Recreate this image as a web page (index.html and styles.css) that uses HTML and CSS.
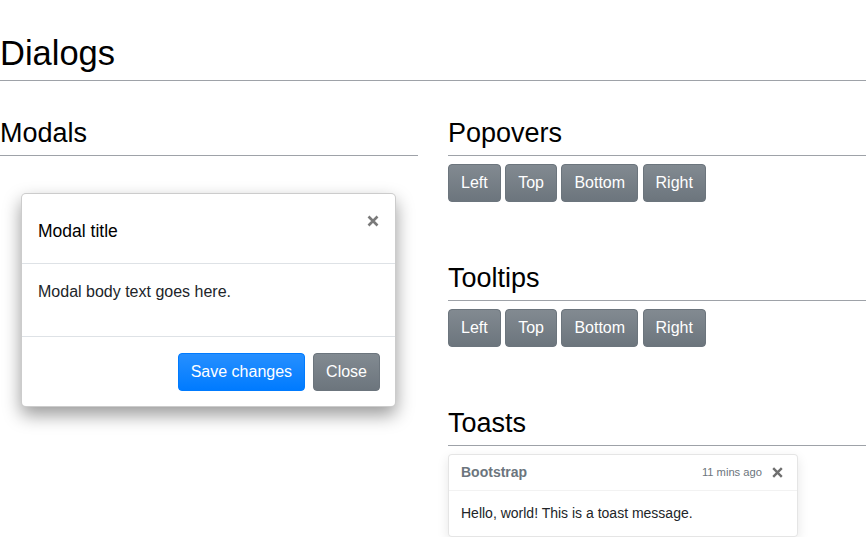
FILE: index.html
```html
<!DOCTYPE html>
<html lang="en">
<head>
<meta charset="utf-8">
<title>Dialogs</title>
<link rel="stylesheet" href="styles.css">
</head>
<body>
  <h1 class="page-title">Dialogs</h1>
  <div class="row">
    <section class="col">
      <h2 class="section-title">Modals</h2>
      <div class="modal">
        <div class="modal-header">
          <h5 class="modal-title">Modal title</h5>
          <button class="close-btn" type="button" aria-label="Close">
            <svg width="12" height="12" viewBox="0 0 12 12"><path d="M1.5 1.5 L10.5 10.5 M10.5 1.5 L1.5 10.5" stroke="currentColor" stroke-width="2.6" stroke-linecap="butt"/></svg>
          </button>
        </div>
        <div class="modal-body">
          <p>Modal body text goes here.</p>
        </div>
        <div class="modal-footer">
          <button class="btn btn-primary" type="button">Save changes</button>
          <button class="btn btn-secondary" type="button">Close</button>
        </div>
      </div>
    </section>
    <div class="col">
      <section class="group">
        <h2 class="section-title">Popovers</h2>
        <div class="btn-row">
          <button class="btn btn-secondary" type="button">Left</button>
          <button class="btn btn-secondary" type="button">Top</button>
          <button class="btn btn-secondary" type="button">Bottom</button>
          <button class="btn btn-secondary" type="button">Right</button>
        </div>
      </section>
      <section class="group">
        <h2 class="section-title">Tooltips</h2>
        <div class="btn-row">
          <button class="btn btn-secondary" type="button">Left</button>
          <button class="btn btn-secondary" type="button">Top</button>
          <button class="btn btn-secondary" type="button">Bottom</button>
          <button class="btn btn-secondary" type="button">Right</button>
        </div>
      </section>
      <section class="group">
        <h2 class="section-title">Toasts</h2>
        <div class="toast">
          <div class="toast-header">
            <strong class="toast-brand">Bootstrap</strong>
            <small class="toast-time">11 mins ago</small>
            <button class="toast-close" type="button" aria-label="Close">
              <svg width="11" height="11" viewBox="0 0 11 11"><path d="M1.2 1.2 L9.8 9.8 M9.8 1.2 L1.2 9.8" stroke="currentColor" stroke-width="2.4"/></svg>
            </button>
          </div>
          <div class="toast-body">Hello, world! This is a toast message.</div>
        </div>
      </section>
    </div>
  </div>
</body>
</html>
```

FILE: styles.css
```css
* { box-sizing: border-box; }

html, body {
  margin: 0;
  padding: 0;
  background: #fff;
}

body {
  font-family: "Liberation Sans", Arial, sans-serif;
  font-size: 16px;
  line-height: 1.5;
  color: #212529;
  overflow: hidden;
}

.page-title {
  margin: 33px 0 0;
  padding: 0 0 6px;
  font-size: 34.5px;
  font-weight: 400;
  line-height: 41px;
  color: #000;
  border-bottom: 1px solid #9ea2a8;
}

.row {
  display: grid;
  grid-template-columns: 418px 418px;
  column-gap: 30px;
  margin-top: 36px;
}

.section-title {
  margin: 0;
  padding: 0 0 6px;
  font-size: 27px;
  font-weight: 400;
  line-height: 32px;
  color: #000;
  border-bottom: 1px solid #9ea2a8;
}

.group + .group { margin-top: 60px; }

.btn-row {
  margin-top: 8px;
  height: 38px;
  font-size: 16px;
  line-height: 38px;
}

.btn {
  display: inline-block;
  vertical-align: top;
  font-family: inherit;
  font-size: 16px;
  line-height: 24px;
  padding: 6px 12px;
  border: 1px solid transparent;
  border-radius: 4px;
  color: #fff;
  cursor: pointer;
}

.btn-primary {
  background: #007bff linear-gradient(180deg, #268fff, #007bff) repeat-x;
  border-color: #007bff;
}

.btn-secondary {
  background: #6c757d linear-gradient(180deg, #828a91, #6c757d) repeat-x;
  border-color: #6c757d;
}

/* Modal */
.modal {
  margin: 37px 22px 0 21px;
  background: #fff;
  border: 1px solid rgba(0, 0, 0, 0.2);
  border-radius: 5px;
  box-shadow: 0 8px 18px rgba(0, 0, 0, 0.4);
}

.modal-header {
  display: flex;
  align-items: flex-start;
  justify-content: space-between;
  padding: 24px 16px 19px 16px;
  border-bottom: 1px solid #dee2e6;
}

.modal-title {
  margin: 0;
  font-size: 17.5px;
  font-weight: 400;
  line-height: 26px;
  color: #000;
}

.close-btn {
  display: flex;
  margin: -3px 0 0;
  padding: 0;
  border: 0;
  background: none;
  color: #7a7a7a;
  cursor: pointer;
}

.modal-body {
  padding: 16px;
}

.modal-body p {
  margin: 0 0 16px;
}

.modal-footer {
  display: flex;
  justify-content: flex-end;
  gap: 8px;
  padding: 16px 15px 15px;
  border-top: 1px solid #dee2e6;
}

/* Toast */
.toast {
  width: 350px;
  margin-top: 8px;
  font-size: 14px;
  line-height: 21px;
  background: rgba(255, 255, 255, 0.85);
  border: 1px solid rgba(0, 0, 0, 0.1);
  border-radius: 4px;
  box-shadow: 0 4px 12px rgba(0, 0, 0, 0.1);
}

.toast-header {
  display: flex;
  align-items: center;
  padding: 7px 14px 7px 12px;
  color: #6c757d;
  border-bottom: 1px solid rgba(0, 0, 0, 0.05);
}

.toast-brand {
  font-weight: 700;
  margin-right: auto;
}

.toast-time {
  font-size: 11.2px;
  margin-right: 1px;
}

.toast-close {
  display: flex;
  margin-left: 9px;
  padding: 0;
  border: 0;
  background: none;
  color: #6f6f6f;
  cursor: pointer;
}

.toast-body {
  padding: 12px;
  color: #212529;
}
```
